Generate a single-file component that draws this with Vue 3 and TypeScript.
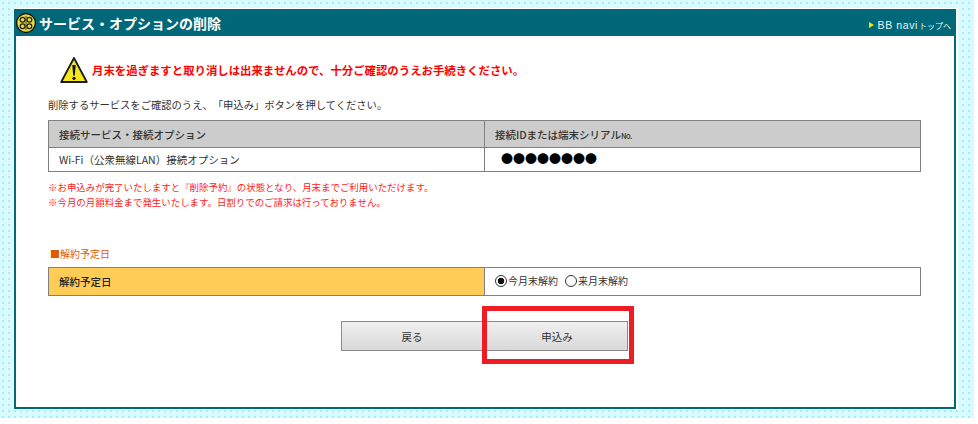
<script setup lang="ts">
const dots = '●●●●●●●●'
</script>

<template>
  <div class="page">
    <section class="panel">
      <header class="head">
        <h1 class="title">
          <svg class="logo" viewBox="0 0 20 20" aria-hidden="true">
            <circle cx="10" cy="10" r="9.4" fill="#e4d83c" stroke="#111" stroke-width="1.3" />
            <circle cx="6.6" cy="6.8" r="2.4" fill="none" stroke="#222" stroke-width="1.2" />
            <circle cx="13.4" cy="6.8" r="2.4" fill="none" stroke="#222" stroke-width="1.2" />
            <circle cx="6.6" cy="13.2" r="2.4" fill="none" stroke="#222" stroke-width="1.2" />
            <circle cx="13.4" cy="13.2" r="2.4" fill="none" stroke="#222" stroke-width="1.2" />
            <path d="M10 3 V17" stroke="#222" stroke-width="0.8" />
          </svg>
          サービス・オプションの削除
        </h1>
        <a class="top-link"><i class="arrow"></i><span class="bb">BB navi</span><span class="top-jp">トップへ</span></a>
      </header>

      <div class="body">
        <div class="warning">
          <svg class="warn-icon" viewBox="0 0 28 28" aria-hidden="true">
            <path d="M14 2 L26.8 26 H1.2 Z" fill="#f4e81c" stroke="#1a1a1a" stroke-width="1.8" stroke-linejoin="round" />
            <path d="M12.3 9 H15.7 L14.8 19.5 H13.2 Z" fill="#111" />
            <circle cx="14" cy="22.3" r="1.6" fill="#111" />
          </svg>
          <p class="warn-text">月末を過ぎますと取り消しは出来ませんので、十分ご確認のうえお手続きください。</p>
        </div>

        <p class="intro">削除するサービスをご確認のうえ、「申込み」ボタンを押してください。</p>

        <table class="grid">
          <tbody>
            <tr class="row-h">
              <th>接続サービス・接続オプション</th>
              <th>接続IDまたは端末シリアル<span class="no">No.</span></th>
            </tr>
            <tr class="row-d">
              <td>Wi-Fi（公衆無線LAN）接続オプション</td>
              <td><span class="dots">{{ dots }}</span></td>
            </tr>
          </tbody>
        </table>

        <div class="notes">
          <p>※お申込みが完了いたしますと『削除予約』の状態となり、月末までご利用いただけます。</p>
          <p>※今月の月額料金まで発生いたします。日割りでのご請求は行っておりません。</p>
        </div>

        <h2 class="sub">■解約予定日</h2>

        <table class="grid date">
          <tbody>
            <tr>
              <th>解約予定日</th>
              <td>
                <label class="radio"><i class="dot on"></i>今月末解約</label>
                <label class="radio"><i class="dot"></i>来月末解約</label>
              </td>
            </tr>
          </tbody>
        </table>

        <div class="actions">
          <button class="btn" type="button">戻る</button>
          <button class="btn" type="button">申込み</button>
          <span class="mark"></span>
        </div>
      </div>
    </section>
  </div>
</template>

<style>
html, body { margin: 0; background: #fff; }
</style>

<style scoped>
.page {
  box-sizing: border-box;
  width: 974px;
  height: 418px;
  padding: 8px 16px 0 13px;
  background-color: #d9fbff;
  background-image: radial-gradient(circle at 3px 3px, #a5eef7 0 1.2px, transparent 1.6px);
  background-size: 6px 6px;
  font-family: "Noto Sans CJK JP", "Noto Sans", sans-serif;
  color: #333;
  text-spacing-trim: space-all;
}
.panel {
  box-sizing: border-box;
  width: 945px;
  height: 402px;
  border: 1px solid #fff;
  border-right-width: 2px;
  background: #fff;
  display: flex;
  flex-direction: column;
}
.head {
  height: 27px;
  flex: none;
  background: #006878;
  display: flex;
  align-items: center;
  justify-content: space-between;
  padding: 0 5px 0 2px;
}
.title {
  margin: 0;
  display: flex;
  align-items: center;
  gap: 3px;
  font-size: 14px;
  font-weight: 700;
  color: #fff;
  line-height: 1;
}
.logo { width: 20px; height: 20px; flex: none; }
.top-link {
  display: flex;
  align-items: center;
  color: #e4f6f8;
  font-family: "Liberation Sans", "Noto Sans CJK JP", sans-serif;
  font-size: 10.5px;
  margin-top: 5px;
}
.arrow {
  width: 0;
  height: 0;
  border-left: 5px solid #f5e600;
  border-top: 3px solid transparent;
  border-bottom: 3px solid transparent;
  margin-right: 4px;
}
.bb { letter-spacing: 0.6px; }
.top-jp { font-size: 8px; font-family: "Noto Sans CJK JP", sans-serif; margin-left: 1px; }
.body {
  flex: 1;
  border: solid #006878;
  border-width: 0 2px 2px;
  padding: 20px 33px 0 32px;
  min-height: 0;
}
.warning {
  display: flex;
  align-items: center;
  height: 27px;
  padding-left: 12px;
}
.warn-icon { width: 28px; height: 28px; flex: none; margin-right: 4px; }
.warn-text {
  margin: 0;
  color: #f00;
  font-size: 11.4px;
  font-weight: 700;
  white-space: nowrap;
}
.intro {
  margin: 14px 0 0;
  height: 16px;
  line-height: 16px;
  font-size: 10.3px;
  white-space: nowrap;
}
.grid {
  width: 873px;
  margin-top: 7px;
  border-collapse: collapse;
  table-layout: fixed;
  font-size: 10.5px;
}
.grid th, .grid td {
  box-sizing: border-box;
  border: 1px solid #808080;
  text-align: left;
  font-weight: 400;
  white-space: nowrap;
}
.grid tr > :first-child { width: 436px; }
.row-h th {
  height: 27px;
  background: #cccccc;
  padding: 0 10px;
  font-weight: 500;
}
.row-d td { height: 24px; padding: 0 10px; }
.no { font-size: 7.5px; letter-spacing: -0.5px; }
.dots {
  font-size: 12px;
  color: #000;
  padding-left: 6px;
  line-height: 1;
}
.notes {
  margin-top: 8px;
  color: #f22;
  font-size: 9.45px;
  line-height: 15px;
}
.notes p { margin: 0; white-space: nowrap; }
.sub {
  margin: 37px 0 0 2px;
  color: #e05a00;
  font-size: 10px;
  font-weight: 400;
  line-height: 14px;
}
.date { margin-top: 6px; }
.date th {
  height: 28px;
  background: #ffcc55;
  padding: 0 10px;
  color: #222;
  font-weight: 500;
}
.date td { padding: 0 0 0 10px; }
.radio {
  display: inline-flex;
  align-items: center;
  margin-right: 7px;
  font-size: 10px;
}
.dot {
  box-sizing: border-box;
  width: 12px;
  height: 12px;
  border: 1px solid #333;
  border-radius: 50%;
  margin-right: 1px;
  background: #fff;
}
.dot.on { background: radial-gradient(circle, #111 0 3px, #fff 3.6px); }
.actions {
  position: relative;
  display: flex;
  justify-content: center;
  gap: 3px;
  margin-top: 25px;
}
.btn {
  box-sizing: border-box;
  width: 142px;
  height: 30px;
  padding: 0;
  border: 1px solid #8a8a8a;
  background: linear-gradient(#efefef, #d9d9d9);
  color: #333;
  font: 400 10.5px "Noto Sans CJK JP", sans-serif;
}
.mark {
  position: absolute;
  left: 434px;
  top: -15px;
  width: 152px;
  height: 58px;
  box-sizing: border-box;
  border: 5px solid #ee1c25;
  pointer-events: none;
}
</style>
